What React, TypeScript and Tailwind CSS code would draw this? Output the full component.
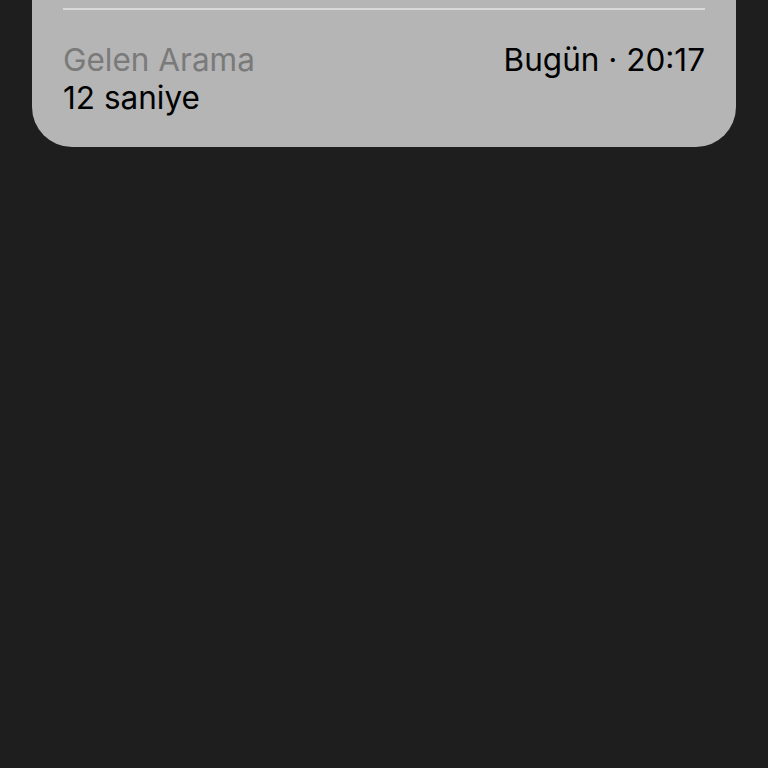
export default function App() {
  return (
    <div
      className="h-[768px] w-[768px] overflow-hidden bg-[#1e1e1e]"
      style={{ fontFamily: 'Inter, "Noto Sans", sans-serif' }}
    >
      <div className="mx-[32px] rounded-b-[40px] bg-[#b5b5b5] px-[31px] pt-[8px] pb-[30px]">
        <div className="h-[2px] bg-[#d9d9d9]" />
        <div className="mt-[31px] flex items-start justify-between">
          <div className="flex flex-col">
            <span className="text-[31.5px] leading-[38px] text-[#7a7a7a]">Gelen Arama</span>
            <span className="text-[31.5px] leading-[38px] text-black">12 saniye</span>
          </div>
          <span className="text-[31.5px] leading-[38px] text-black">Bugün · 20:17</span>
        </div>
      </div>
    </div>
  );
}
